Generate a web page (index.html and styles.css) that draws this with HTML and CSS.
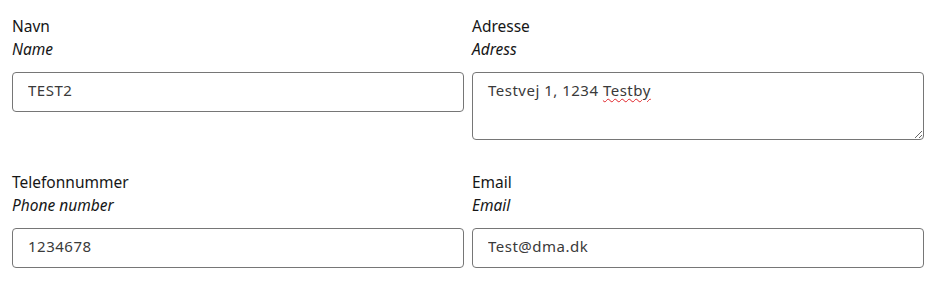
FILE: index.html
```html
<!DOCTYPE html>
<html lang="da">

<head>
    <meta charset="UTF-8">
    <meta name="viewport" content="width=device-width, initial-scale=1.0">
    <title>Kontaktoplysninger</title>

    <link rel="stylesheet" href="styles.css">
</head>

<body>

    <form class="contact-form">
        <div class="field">
            <label class="field-label" for="navn">
                <span class="label-da">Navn</span>
                <span class="label-en">Name</span>
            </label>
            <input type="text" id="navn" class="field-input" value="TEST2">
        </div>

        <div class="field">
            <label class="field-label">
                <span class="label-da">Adresse</span>
                <span class="label-en">Adress</span>
            </label>
            <!-- div instead of textarea so the spell-check squiggle can be shown -->
            <div class="field-input field-area">Testvej 1, 1234 <span class="misspelled">Testby</span></div>
        </div>

        <div class="field">
            <label class="field-label" for="telefon">
                <span class="label-da">Telefonnummer</span>
                <span class="label-en">Phone number</span>
            </label>
            <input type="text" id="telefon" class="field-input" value="1234678">
        </div>

        <div class="field">
            <label class="field-label" for="email">
                <span class="label-da">Email</span>
                <span class="label-en">Email</span>
            </label>
            <input type="text" id="email" class="field-input" value="Test@dma.dk">
        </div>
    </form>

</body>

</html>
```

FILE: styles.css
```css
body,
html {
    margin: 0;
    background-color: #fff;
    font-family: "Noto Sans", Arial, sans-serif;
    color: #161616;
}

.contact-form {
    display: grid;
    grid-template-columns: 452px 452px;
    column-gap: 8px;
    row-gap: 31px;
    padding: 15px 16px 0 12px;
}

.field {
    display: flex;
    flex-direction: column;
}

.field-label {
    display: flex;
    flex-direction: column;
    margin-bottom: 11px;
    font-size: 15.5px;
    line-height: 23px;
}

.label-en {
    font-style: italic;
}

.field-input {
    box-sizing: border-box;
    width: 100%;
    height: 40px;
    margin: 0;
    padding: 0 15px 4px;
    border: 1px solid #767676;
    border-radius: 4px;
    background-color: #fff;
    font-family: "Noto Sans", Arial, sans-serif;
    font-size: 15px;
    letter-spacing: 0.5px;
    color: #3a3a3a;
    outline: none;
}

.field-area {
    height: 68px;
    padding-top: 7px;
    line-height: 20px;
    overflow: auto;
    resize: vertical;
}

.misspelled {
    text-decoration: underline wavy #e0242a;
    text-decoration-thickness: 1px;
    text-underline-offset: 2px;
}
```
